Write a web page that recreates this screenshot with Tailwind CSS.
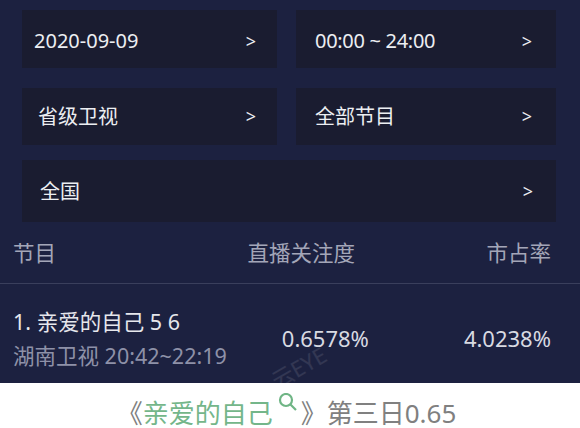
<!DOCTYPE html>
<html lang="zh"><head><meta charset="utf-8">
<script src="https://cdn.jsdelivr.net/npm/@tailwindcss/browser@4"></script>
</head>
<body class="w-[580px] h-[428px] overflow-hidden bg-white font-['Noto_Sans','Noto_Sans_CJK_SC',sans-serif]">
<div class="relative h-[383px] bg-[#1c2140] flex flex-col overflow-hidden">
  <div class="pt-[10px] pl-[22px] pr-[24px] flex flex-col text-[20px] text-[#eceef2]">
    <div class="grid grid-cols-[255px_260px] gap-x-[19px]">
      <div class="h-[58px] pt-[4px] bg-[#1a1c30] flex items-center justify-between pl-[12px] pr-[21px]"><span>2020-09-09</span><span class="text-[18px]">&gt;</span></div>
      <div class="h-[58px] pt-[4px] bg-[#1a1c30] flex items-center justify-between pl-[19px] pr-[24px]"><span class="tracking-[-0.3px]">00:00 ~ 24:00</span><span class="text-[18px]">&gt;</span></div>
    </div>
    <div class="grid grid-cols-[255px_260px] gap-x-[19px] mt-[20px]">
      <div class="h-[57px] bg-[#1a1c30] flex items-center justify-between pl-[16px] pr-[21px]"><span>省级卫视</span><span class="text-[18px]">&gt;</span></div>
      <div class="h-[57px] bg-[#1a1c30] flex items-center justify-between pl-[19px] pr-[24px]"><span>全部节目</span><span class="text-[18px]">&gt;</span></div>
    </div>
    <div class="h-[62px] pt-[1px] mt-[15px] bg-[#1a1c30] flex items-center justify-between pl-[18px] pr-[23px]"><span>全国</span><span class="text-[18px]">&gt;</span></div>
  </div>
  <div class="h-[62px] pt-[1px] flex items-center justify-between pl-[13px] pr-[29px] text-[21.5px] text-[#a3a6b8] border-b border-[#3a3f5c]">
    <span>节目</span><span class="ml-[60px]">直播关注度</span><span>市占率</span>
  </div>
  <div class="flex items-center justify-between pl-[13px] pr-[29px] pt-[10px] flex-1">
    <div class="flex flex-col">
      <span class="text-[21.5px] leading-[34px] text-[#e6e7ec]">1. 亲爱的自己 5 6</span>
      <span class="text-[21.5px] leading-[34px] text-[#8e91a8]">湖南卫视 20:42~22:19</span>
    </div>
    <span class="text-[22px] text-[#d8dae2] mr-[40px]">0.6578%</span>
    <span class="text-[22px] text-[#d8dae2]">4.0238%</span>
  </div>
  <span class="absolute left-[269px] top-[356px] -rotate-[30deg] text-[22px] leading-none text-white/10">云EYE</span>
</div>
<div class="h-[45px] flex items-center justify-center text-[26px] leading-[30px] text-[#808080] pt-[14px] pr-[7px]">
  <span>《</span><span class="text-[#74b68a]">亲爱的自己</span>
  <svg class="w-[20px] h-[20px] self-start mt-[-4px] ml-[5px] mr-[3px] shrink-0" viewBox="0 0 20 20" fill="none" stroke="#6fb585" stroke-width="2.2"><circle cx="8" cy="7" r="6"/><path d="M12.5 11.5l5.5 5.5"/></svg>
  <span>》第三日0.65</span>
</div>
</body></html>
